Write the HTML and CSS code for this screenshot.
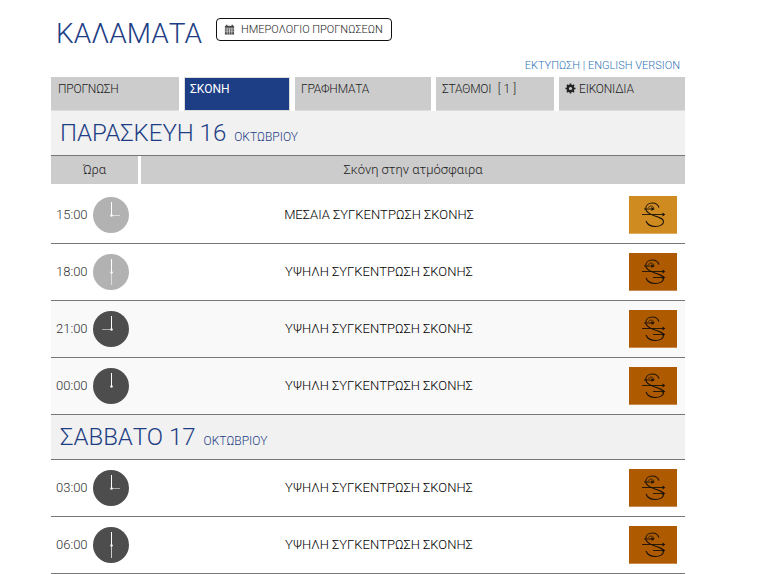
FILE: index.html
```html
<!DOCTYPE html>
<html lang="el">
<head>
<meta charset="utf-8">
<title>ΚΑΛΑΜΑΤΑ</title>
<link rel="stylesheet" href="styles.css">
</head>
<body>
<svg class="defs" width="0" height="0" aria-hidden="true">
  <defs>
    <g id="dust-s" fill="none" stroke="#1a1208" stroke-width="1.100">
      <path d="M30 11.500C28.800 8.500 26.500 7 23.500 7 19.500 7 16.800 9.300 16.800 12.500c0 3.500 3.200 5.500 9.200 7.500 5 1.700 8.500 2.700 8.500 5.500 0 3-3.500 5-8 5-4.500 0-8-1.500-9.500-5.500"/>
      <path d="M24.500 14c1-2.200-.3-4-2.500-4-1.300 0-2.300.7-2.500 2" stroke-width=".7"/>
      <path d="M15 13h8" stroke-width=".9"/><path d="M13 18.500h22" stroke-width=".9"/>
      <path d="M22.500 11l2.800 2-2.800 2zM33.500 16.500l2.800 2-2.800 2z" fill="#1a1208" stroke="none"/>
    </g>
    <g id="dust-arrow" fill="none" stroke="#1a1208" stroke-width=".9">
      <path d="M24 24.500h11"/>
      <path d="M33.500 22.500l2.800 2-2.800 2z" fill="#1a1208" stroke="none"/>
    </g>
  </defs>
</svg>
<div class="page">
  <header class="head">
    <h1 class="city">ΚΑΛΑΜΑΤΑ</h1>
    <a class="calendar-btn">
      <svg class="cal-icon" viewBox="0 0 12 12"><path d="M1 2h10v9.500H1z" fill="#444"/><path d="M3 .8v2M9 .8v2" stroke="#444" stroke-width="1.500"/><path d="M1 4.500h10M1 6.500h10M1 8.500h10M3.500 4.500v7M6 4.500v7M8.500 4.500v7" stroke="#fff" stroke-width=".6"/></svg>
      ΗΜΕΡΟΛΟΓΙΟ ΠΡΟΓΝΩΣΕΩΝ
    </a>
  </header>
  <div class="links">ΕΚΤΥΠΩΣΗ | ENGLISH VERSION</div>
  <nav class="tabs">
    <a class="tab t1">ΠΡΟΓΝΩΣΗ</a>
    <a class="tab t2 active">ΣΚΟΝΗ</a>
    <a class="tab t3">ΓΡΑΦΗΜΑΤΑ</a>
    <a class="tab t4">ΣΤΑΘΜΟΙ &nbsp;[ 1 ]</a>
    <a class="tab t5"><svg class="gear" viewBox="0 0 12 12"><circle cx="6" cy="6" r="3.200" fill="none" stroke="#222" stroke-width="2.200"/><path d="M6 .5v11M.5 6h11M2.100 2.100l7.800 7.800M9.900 2.100l-7.800 7.800" stroke="#222" stroke-width="1.700"/><circle cx="6" cy="6" r="1.700" fill="#ccc"/></svg>ΕΙΚΟΝΙΔΙΑ</a>
  </nav>
  <section class="day"><span class="day-name">ΠΑΡΑΣΚΕΥΗ 16</span><span class="month">ΟΚΤΩΒΡΙΟΥ</span></section>
  <div class="cols"><div class="col-time">Ώρα</div><div class="col-main">Σκόνη στην ατμόσφαιρα</div></div>

  <div class="row">
    <span class="time">15:00</span>
    <svg class="clock" viewBox="0 0 36 36"><circle cx="18" cy="18" r="18" fill="#b2b2b2"/><path d="M18.500 18V5" stroke="#fff"/><path d="M18.500 18.500H27" stroke="#ddd"/><circle cx="18.500" cy="18.500" r="1.200" fill="#fff"/></svg>
    <span class="desc">ΜΕΣΑΙΑ ΣΥΓΚΕΝΤΡΩΣΗ ΣΚΟΝΗΣ</span>
    <svg class="dust medium" viewBox="0 0 48 37"><use href="#dust-s"/></svg>
  </div>
  <div class="row">
    <span class="time">18:00</span>
    <svg class="clock" viewBox="0 0 36 36"><circle cx="18" cy="18" r="18" fill="#b2b2b2"/><path d="M18.500 18V5" stroke="#fff"/><path d="M18.500 18v13" stroke="#ddd"/><circle cx="18.500" cy="18.500" r="1.200" fill="#fff"/></svg>
    <span class="desc">ΥΨΗΛΗ ΣΥΓΚΕΝΤΡΩΣΗ ΣΚΟΝΗΣ</span>
    <svg class="dust high" viewBox="0 0 48 37"><use href="#dust-s"/><use href="#dust-arrow"/></svg>
  </div>
  <div class="row alt">
    <span class="time">21:00</span>
    <svg class="clock" viewBox="0 0 36 36"><circle cx="18" cy="18" r="18" fill="#4d4d4d"/><path d="M18.500 18V5" stroke="#fff"/><path d="M18.500 18.500H9" stroke="#aaa"/><circle cx="18.500" cy="18.500" r="1.200" fill="#fff"/></svg>
    <span class="desc">ΥΨΗΛΗ ΣΥΓΚΕΝΤΡΩΣΗ ΣΚΟΝΗΣ</span>
    <svg class="dust high" viewBox="0 0 48 37"><use href="#dust-s"/><use href="#dust-arrow"/></svg>
  </div>
  <div class="row alt">
    <span class="time">00:00</span>
    <svg class="clock" viewBox="0 0 36 36"><circle cx="18" cy="18" r="18" fill="#4d4d4d"/><path d="M18.500 18V5" stroke="#fff"/><circle cx="18.500" cy="18.500" r="1.200" fill="#fff"/></svg>
    <span class="desc">ΥΨΗΛΗ ΣΥΓΚΕΝΤΡΩΣΗ ΣΚΟΝΗΣ</span>
    <svg class="dust high" viewBox="0 0 48 37"><use href="#dust-s"/><use href="#dust-arrow"/></svg>
  </div>

  <section class="day"><span class="day-name">ΣΑΒΒΑΤΟ 17</span><span class="month month-wide">ΟΚΤΩΒΡΙΟΥ</span></section>

  <div class="row">
    <span class="time">03:00</span>
    <svg class="clock" viewBox="0 0 36 36"><circle cx="18" cy="18" r="18" fill="#4d4d4d"/><path d="M18.500 18V5" stroke="#fff"/><path d="M18.500 18.500H27" stroke="#aaa"/><circle cx="18.500" cy="18.500" r="1.200" fill="#fff"/></svg>
    <span class="desc">ΥΨΗΛΗ ΣΥΓΚΕΝΤΡΩΣΗ ΣΚΟΝΗΣ</span>
    <svg class="dust high" viewBox="0 0 48 37"><use href="#dust-s"/><use href="#dust-arrow"/></svg>
  </div>
  <div class="row">
    <span class="time">06:00</span>
    <svg class="clock" viewBox="0 0 36 36"><circle cx="18" cy="18" r="18" fill="#4d4d4d"/><path d="M18.500 18V5" stroke="#fff"/><path d="M18.500 18v13" stroke="#ccc"/><circle cx="18.500" cy="18.500" r="1.200" fill="#fff"/></svg>
    <span class="desc">ΥΨΗΛΗ ΣΥΓΚΕΝΤΡΩΣΗ ΣΚΟΝΗΣ</span>
    <svg class="dust high" viewBox="0 0 48 37"><use href="#dust-s"/><use href="#dust-arrow"/></svg>
  </div>
</div>
</body>
</html>
```
FILE: styles.css
```css
* { box-sizing: border-box; }
html, body { margin: 0; height: 100%; overflow: hidden; background: #fff; }
body { font-family: Roboto, "Noto Sans", sans-serif; color: #333; }
.defs { position: absolute; }
.page { width: 634px; margin-left: 51px; }
.head { height: 58px; display: flex; align-items: flex-start; padding: 17px 0 0 5px; }
.city { margin: 1px 0 0; font-size: 28px; font-weight: 300; line-height: 32px; color: #1d3e85; }
.calendar-btn { margin: 1px 0 0 14px; width: 176px; height: 23px; border: 1px solid #111; border-radius: 4px; display: flex; align-items: center; padding-left: 7px; gap: 6px; font-size: 11px; font-weight: 300; color: #222; white-space: nowrap; }
.cal-icon { width: 11px; height: 11px; flex: none; }
.links { height: 19px; font-size: 11px; font-weight: 300; line-height: 15px; text-align: right; color: #2f74b5; padding-right: 5px; }
.tabs { display: flex; height: 34px; }
.tab { background: #ccc; font-size: 12px; font-weight: 300; letter-spacing: -.2px; color: #222; padding: 5px 0 0 7px; line-height: 14px; border-bottom: 1px solid #ddd; white-space: nowrap; }
.t1 { width: 128px; margin-right: 5px; }
.t2 { width: 106px; margin-right: 5px; }
.t3 { width: 136px; margin-right: 5px; padding-left: 6px; }
.t4 { width: 118px; margin-right: 5px; padding-left: 6px; word-spacing: .5px; }
.t5 { width: 126px; padding-left: 6px; }
.active { background: #1d3e85; color: #fff; font-weight: 400; letter-spacing: 0; border: 1px solid #ddd; padding: 4px 0 0 5px; }
.gear { width: 11px; height: 11px; margin-right: 3px; vertical-align: -1px; }
.day { height: 45px; background: #f1f1f1; border-bottom: 1px solid #777; display: flex; align-items: baseline; padding: 7px 0 0 9px; }
.day-name { font-size: 24px; font-weight: 300; line-height: 30px; color: #1d3e85; }
.month { font-size: 12px; font-weight: 300; color: #1d3e85; margin-left: 8px; }
.cols { display: flex; height: 28px; margin-bottom: 3px; gap: 3px; font-size: 13px; font-weight: 300; line-height: 28px; text-align: center; color: #222; }
.col-time { width: 87px; background: #ccc; }
.col-main { flex: 1; background: #ccc; }
.row { height: 57px; display: flex; align-items: center; border-bottom: 1px solid #777; padding: 4px 8px 4px 5px; }
.alt { background: #f9f9f9; }
.time { width: 37px; font-size: 13px; font-weight: 300; color: #333; margin-bottom: 2px; }
.clock { width: 36px; height: 36px; flex: none; }
.desc { flex: 1; text-align: center; font-size: 13px; font-weight: 300; color: #000; margin-bottom: 2px; }
.dust { width: 48px; height: 38px; flex: none; }
.medium { background: #cf8a20; border-bottom: 1px solid #e0b060; }
.high { background: #ae5a00; border-bottom: 1px solid #c98a4a; }
```
